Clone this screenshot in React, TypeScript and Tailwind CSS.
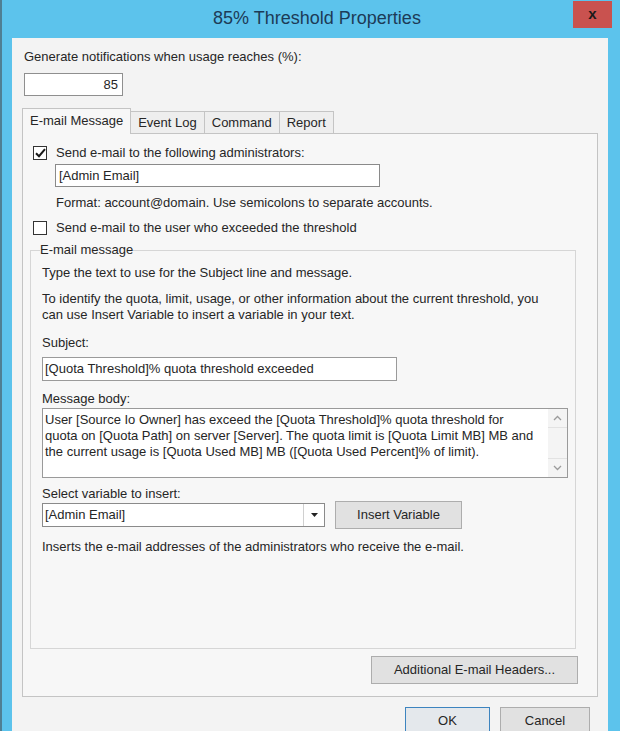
import { useState } from "react";

const font = { fontFamily: '"Liberation Sans", Arial, sans-serif' };

function CheckBox({ checked }: { checked: boolean }) {
	return (
		<span className="flex h-[14px] w-[14px] shrink-0 items-center justify-center border border-[#333] bg-white">
			{checked && (
				<svg width="11" height="10" viewBox="0 0 11 10">
					<path d="M1 5.2L4 8.2L10 1.2" fill="none" stroke="#1a1a1a" strokeWidth="2" />
				</svg>
			)}
		</span>
	);
}

function Line({ children, className = "" }: { children: React.ReactNode; className?: string }) {
	return <div className={"h-[16px] whitespace-nowrap leading-[16px] " + className}>{children}</div>;
}

export default function App() {
	const [tab, setTab] = useState("E-mail Message");
	const tabs = ["E-mail Message", "Event Log", "Command", "Report"];

	return (
		<div
			className="flex h-[731px] w-[620px] flex-col overflow-hidden border-l-2 border-[#4f7f93] bg-[#5cc3ec] text-[13px] text-[#262626]"
			style={font}
		>
			{/* title bar */}
			<div className="flex h-[38px] shrink-0 items-start">
				<div className="w-[59px]" />
				<div className="flex-1 pt-[8px] text-center text-[18px] leading-[21px] text-[#1d3b57]">
					85% Threshold Properties
				</div>
				<button className="mt-[1px] mr-[8px] flex h-[27px] w-[39px] items-center justify-center bg-[#c9524f] text-[15px] font-bold text-[#1a1a1a]">
					x
				</button>
			</div>

			{/* client area */}
			<div className="ml-[10px] mr-[12px] flex flex-1 flex-col bg-[#f3f3f3]">
				<Line className="mt-[11px] ml-[12px]">Generate notifications when usage reaches (%):</Line>
				<div className="mt-[8px] ml-[12px] flex h-[23px] w-[99px] items-center justify-end border border-[#8f8f8f] bg-white pr-[4px]">
					85
				</div>

				{/* tabs */}
				<div className="mt-[12px] ml-[10px] flex h-[25px] items-end">
					{tabs.map((t) => {
						const active = t === tab;
						return (
							<button
								key={t}
								onClick={() => setTab(t)}
								className={
									active
										? "relative z-10 -mb-px flex h-[26px] items-center border border-b-0 border-[#c4c4c4] bg-[#f7f7f7] px-[7px] pb-[2px]"
										: "-ml-px flex h-[22px] items-center border border-b-0 border-[#c4c4c4] bg-[#eeeeee] px-[7px]"
								}
							>
								{t}
							</button>
						);
					})}
				</div>

				{/* tab panel */}
				<div className="ml-[10px] flex h-[564px] w-[576px] flex-col border border-[#c4c4c4] bg-[#f7f7f7]">
					<div className="mt-[11px] ml-[10px] flex h-[16px] items-center gap-[9px]">
						<CheckBox checked />
						<span>Send e-mail to the following administrators:</span>
					</div>
					<div className="mt-[3px] ml-[32px] flex h-[23px] w-[325px] items-center border border-[#8a8a8a] bg-white pl-[3px]">
						[Admin Email]
					</div>
					<Line className="mt-[8px] ml-[33px]">Format: account@domain. Use semicolons to separate accounts.</Line>
					<div className="mt-[9px] ml-[10px] flex h-[16px] items-center gap-[9px]">
						<CheckBox checked={false} />
						<span>Send e-mail to the user who exceeded the threshold</span>
					</div>

					{/* group box */}
					<fieldset className="mt-[6px] ml-[7px] h-[407px] w-[546px] border border-[#d6d6d6] pl-[11px]">
						<legend className="-ml-[2px] h-[16px] px-0 leading-[16px]">E-mail message</legend>
						<Line className="mt-[7px]">Type the text to use for the Subject line and message.</Line>
						<div className="mt-[10px] whitespace-nowrap leading-[16px]">
							To identify the quota, limit, usage, or other information about the current threshold, you
							<br />
							can use Insert Variable to insert a variable in your text.
						</div>
						<Line className="mt-[12px]">Subject:</Line>
						<div className="mt-[6px] flex h-[24px] w-[355px] items-center border border-[#9a9a9a] bg-white pl-[2px]">
							[Quota Threshold]% quota threshold exceeded
						</div>
						<Line className="mt-[10px]">Message body:</Line>
						<div className="mt-[1px] flex h-[70px] w-[526px] border border-[#9a9a9a] bg-white">
							<div className="flex-1 whitespace-nowrap pt-[3px] pl-[2px] leading-[16px]">
								User [Source Io Owner] has exceed the [Quota Threshold]% quota threshold for
								<br />
								quota on [Quota Path] on server [Server]. The quota limit is [Quota Limit MB] MB and
								<br />
								the current usage is [Quota Used MB] MB ([Quota Used Percent]% of limit).
							</div>
							<div className="flex w-[19px] flex-col justify-between bg-[#f4f4f4]">
								<div className="flex h-[19px] items-center justify-center border-b border-[#e2e2e2]">
									<svg width="9" height="6" viewBox="0 0 9 6">
										<path d="M1 5L4.5 1.5L8 5" fill="none" stroke="#9b9b9b" strokeWidth="1.3" />
									</svg>
								</div>
								<div className="flex h-[19px] items-center justify-center border-t border-[#e2e2e2]">
									<svg width="9" height="6" viewBox="0 0 9 6">
										<path d="M1 1L4.5 4.5L8 1" fill="none" stroke="#9b9b9b" strokeWidth="1.3" />
									</svg>
								</div>
							</div>
						</div>
						<div className="mt-[9px] h-[14px] leading-[14px]">Select variable to insert:</div>
						<div className="flex h-[28px] items-center">
							<div className="flex h-[24px] w-[283px] items-center border border-[#8a8a8a] bg-white">
								<span className="flex-1 pl-[2px]">[Admin Email]</span>
								<span className="flex h-full w-[21px] items-center justify-center border-l border-[#d0d0d0]">
									<svg width="7" height="4" viewBox="0 0 7 4">
										<path d="M0 0H7L3.5 4Z" fill="#222" />
									</svg>
								</span>
							</div>
							<button className="ml-[10px] h-[28px] w-[127px] border border-[#adadad] bg-[#e1e1e1]">
								Insert Variable
							</button>
						</div>
						<Line className="mt-[10px]">Inserts the e-mail addresses of the administrators who receive the e-mail.</Line>
					</fieldset>

					<div className="mt-[7px] flex justify-end pr-[19px]">
						<button className="h-[28px] w-[207px] border border-[#adadad] bg-[#e1e1e1]">
							Additional E-mail Headers...
						</button>
					</div>
				</div>

				{/* dialog buttons */}
				<div className="mt-[10px] flex justify-end gap-[10px] pr-[18px]">
					<button className="h-[28px] w-[85px] border border-[#3d84bf] bg-[#e4e8ec]">OK</button>
					<button className="h-[28px] w-[90px] border border-[#adadad] bg-[#e1e1e1]">Cancel</button>
				</div>
			</div>
		</div>
	);
}
